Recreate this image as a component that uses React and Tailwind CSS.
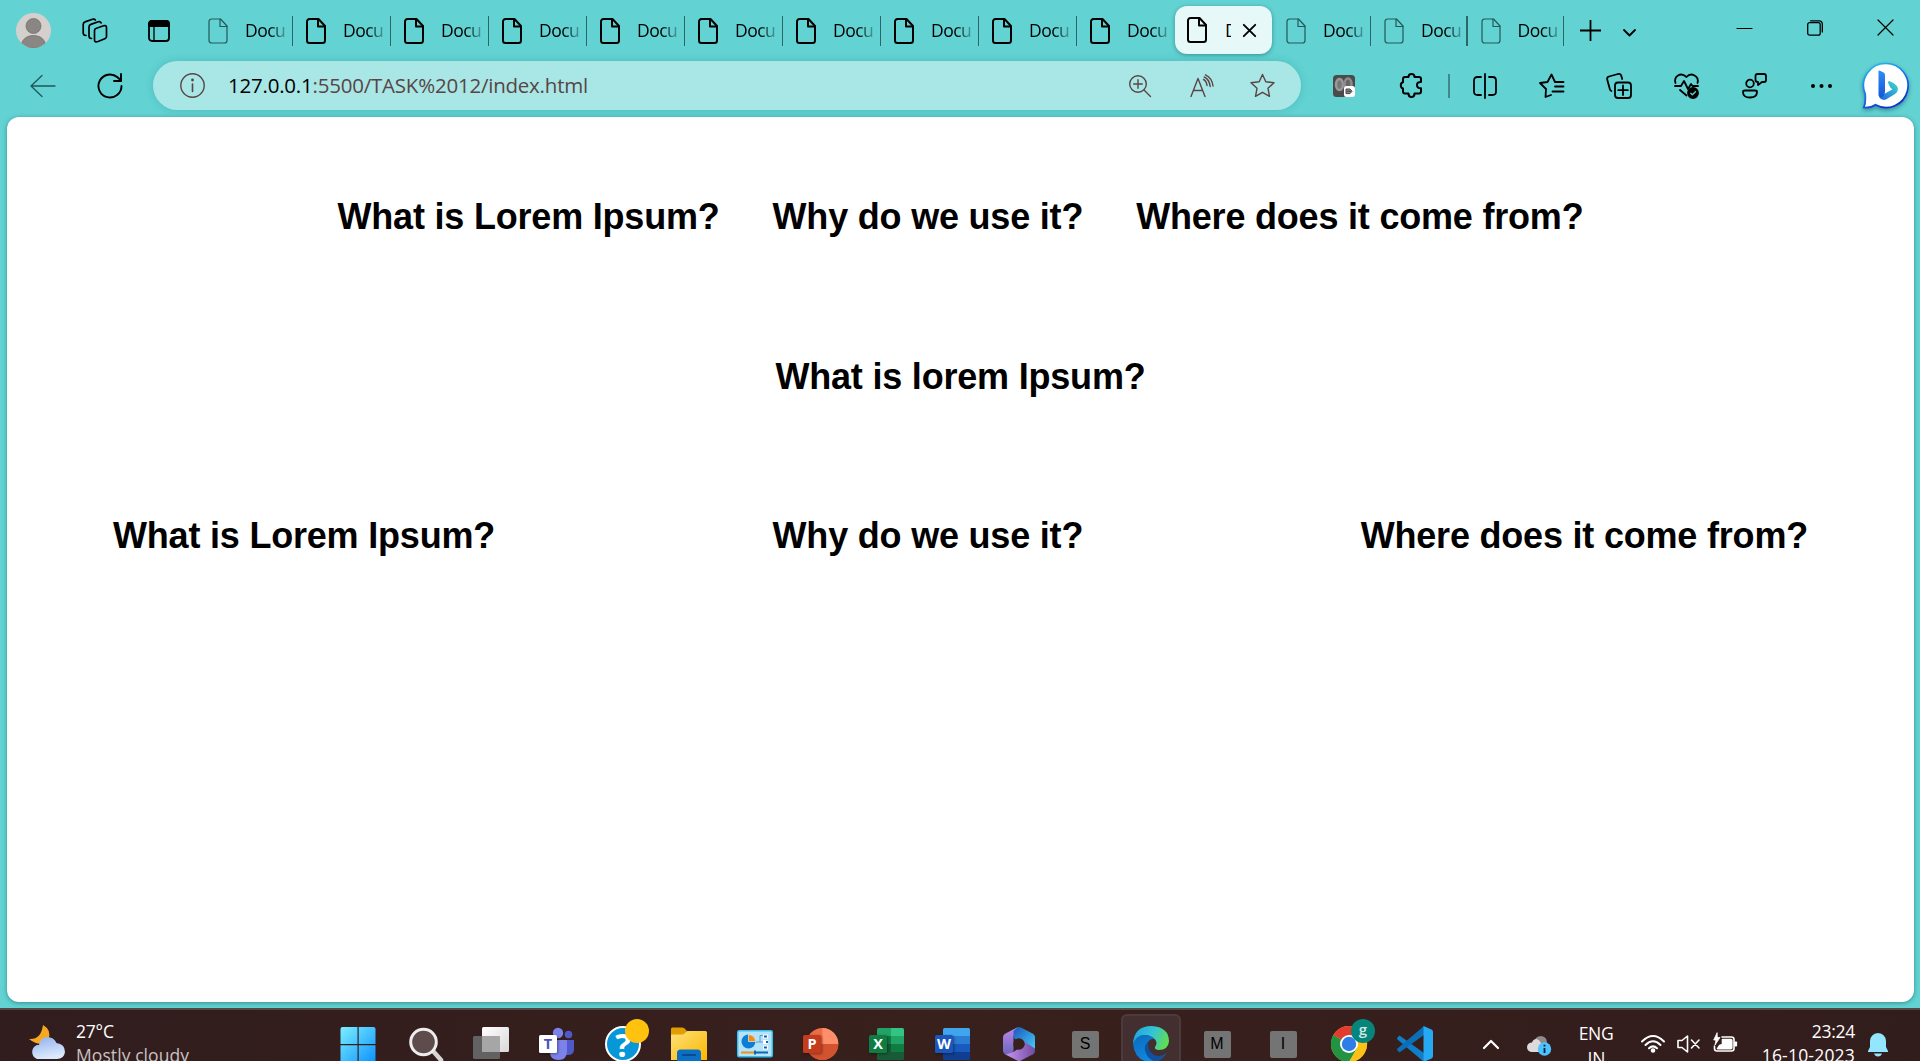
import React from "react";

const UI = "font-['Open_Sans','Noto_Sans',sans-serif]";

function Svg({ w = 26, h = w, vb = "0 0 24 24", className = "", sw = 1.5, children }) {
  return (
    <svg
      width={w}
      height={h}
      viewBox={vb}
      fill="none"
      stroke="currentColor"
      strokeWidth={sw}
      strokeLinecap="round"
      strokeLinejoin="round"
      className={"block shrink-0 overflow-visible " + className}
    >
      {children}
    </svg>
  );
}

function PageIcon({ dim }) {
  return (
    <Svg w={20} h={26} vb="0 0 20 26" sw={dim ? 1.2 : 2} className={dim ? "text-[#24585a]" : "text-black"}>
      <path d="M3.5 1H12.5L19 8V22.5a2.5 2.5 0 0 1-2.5 2.5h-13A2.5 2.5 0 0 1 1 22.5v-19A2.5 2.5 0 0 1 3.5 1Z" />
      <path d="M12 1.200V8.500H19" />
    </Svg>
  );
}

const tabs = Array.from({ length: 14 }, (_, i) => ({
  id: i,
  dim: i === 0 || i > 10,
  active: i === 10,
  divider: i !== 9 && i !== 10,
  width: i > 11 ? "w-[96.500px]" : "w-[98px]",
}));

function Tab({ dim, active, divider, width }) {
  if (active) {
    return (
      <div className="mt-1.5 mr-px flex h-12 w-[97px] items-center rounded-[12px] bg-[#e6f8f8] pl-3 shadow-[0_1px_4px_rgba(0,70,70,0.45)]">
        <PageIcon />
        <div className="ml-[18px] w-[6px] overflow-hidden text-[18px] leading-6 text-black">D</div>
        <Svg w={13} vb="0 0 13 13" sw={1.9} className="ml-3 text-black">
          <path d="M.8.8l11.400 11.400M12.200.8.8 12.200" />
        </Svg>
      </div>
    );
  }
  return (
    <div className={"flex h-[61px] items-center pl-[13px] " + width}>
      <PageIcon dim={dim} />
      <div className="mr-auto mb-0.5 ml-[17px] bg-linear-to-r from-black from-60% to-black/25 bg-clip-text text-[17.500px] leading-6 tracking-[-0.500px] whitespace-nowrap text-transparent">
        Docu
      </div>
      {divider && <div className="h-[30px] w-[1.500px] bg-[#2d6668]" />}
    </div>
  );
}

function TabStrip() {
  return (
    <div className="flex h-[61px] items-center">
      <div className="ml-4 size-[35px] overflow-hidden rounded-full bg-[#d3d0ce]">
        <svg viewBox="0 0 35 35" className="block size-full">
          <circle cx="17.500" cy="13" r="7.500" fill="#8a8684" stroke="#6e6a68" strokeWidth=".7" />
          <path d="M5 35c0-8 5-12.500 12.500-12.500S30 27 30 35Z" fill="#8a8684" stroke="#6e6a68" strokeWidth=".7" />
        </svg>
      </div>
      <Svg w={26} vb="0 0 26 26" sw={1.700} className="ml-[31px] text-black">
        <path d="M14.500 10.300 21.500 7.800q3-.9 3 1.700v9q0 1.600-1.700 2.300l-6.800 2.700q-3.500 1.300-3.500-1.700v-9.300q0-1.700 2-2.200Z" />
        <path d="M9.500 20.500Q7 20.300 7 18V9q0-2 1.800-2.600l7.500-2.700q2-.6 2.800 1.200" />
        <path d="M4 17.500Q1.200 17.300 1.200 15V6.500q0-2 1.800-2.600L10.500 1.200q2-.6 2.800.8" />
      </Svg>
      <Svg w={22} vb="0 0 22 22" sw={1.800} className="ml-10 text-black">
        <rect x="1" y="1" width="20" height="20" rx="3" />
        <path d="M1 6V4q0-3 3-3h14q3 0 3 3v2Z" fill="currentColor" />
        <path d="M6 6v15" strokeWidth="1.300" />
      </Svg>
      <div className="ml-[25px] flex h-[61px]">
        {tabs.map((t) => (
          <Tab key={t.id} dim={t.dim} active={t.active} divider={t.divider} width={t.width} />
        ))}
      </div>
      <Svg w={21} vb="0 0 21 21" sw={1.800} className="ml-4 text-black">
        <path d="M10.500 0v21M0 10.500h21" strokeLinecap="butt" />
      </Svg>
      <Svg w={13} h={8} vb="0 0 13 8" sw={1.800} className="mt-1 ml-[22px] text-black">
        <path d="m1 1 5.500 5.500L12 1" />
      </Svg>
      <div className="mr-[27px] ml-auto flex h-full items-center pb-1.5 text-black">
        <Svg w={15} h={16} vb="0 0 15 16" sw={1.200}>
          <path d="M0 8.500h15" />
        </Svg>
        <Svg w={16} vb="0 0 16 16" sw={1.300} className="ml-[55px]">
          <rect x=".7" y="2.700" width="12.500" height="12.500" rx="2" />
          <path d="M3.500.8h8.500q3.300 0 3.300 3.300v8" />
        </Svg>
        <Svg w={15} vb="0 0 15 15" sw={1.200} className="ml-[55px]">
          <path d="m0 0 15 15M15 0 0 15" />
        </Svg>
      </div>
    </div>
  );
}

function BingIcon() {
  return (
    <svg width="48" height="48" viewBox="0 0 48 48" className="ml-[30px] block shrink-0 overflow-visible drop-shadow-[0_2px_2px_rgba(0,50,90,0.45)]">
      <defs>
        <linearGradient id="bingRing" x1="0" y1="0" x2=".5" y2="1">
          <stop offset="0" stopColor="#20c4f0" />
          <stop offset=".5" stopColor="#1b7df0" />
          <stop offset="1" stopColor="#1232cc" />
        </linearGradient>
        <linearGradient id="bingStem" x1="0" y1="0" x2="0" y2="1">
          <stop offset="0" stopColor="#2f8df5" />
          <stop offset="1" stopColor="#1557d6" />
        </linearGradient>
        <linearGradient id="bingBowl" x1="0" y1="1" x2="1" y2="0">
          <stop offset="0" stopColor="#1c62e0" />
          <stop offset="1" stopColor="#3de0c8" />
        </linearGradient>
      </defs>
      <path d="M24 1.500a22 22 0 1 1-10.500 41.300Q9 46 1.800 45.500 4 41 3.200 32A22 22 0 0 1 24 1.500Z" fill="#fff" stroke="url(#bingRing)" strokeWidth="1.700" />
      <path d="M17 35q2.500 4 7 2.500l9-5.500q4-3 2.500-7-1.500-3-7-5.500-3-1-2.500 1l2 4.500q.8 1.500 2.500 2.300Z" fill="url(#bingBowl)" />
      <path d="M16.500 9.500q0-1.500 1.500-.8l3.500 1.800q1.500.8 1.500 2.500v17q-.5 4-3.500 5.500-3 0-3-3Z" fill="url(#bingStem)" />
    </svg>
  );
}

function Toolbar() {
  return (
    <div className="flex h-[49px] items-center text-black">
      <Svg w={25} h={22} vb="0 0 25 22" sw={1.300} className="ml-[30px] text-[#22585a]">
        <path d="M25 11H1M12 .5 1 11l11 10.500" />
      </Svg>
      <Svg w={26} vb="0 0 26 26" sw={1.900} className="ml-[42px]">
        <path d="M24.500 13A11.500 11.500 0 1 1 20.500 4.300L24 7.500" />
        <path d="M24 1v7h-7" />
      </Svg>
      <div className="ml-[30px] flex h-[49px] w-[1148px] items-center rounded-full bg-[#a8e7e6] text-[#5a4445] shadow-[0_0_8px_rgba(0,110,115,0.22)]">
        <Svg w={25} vb="0 0 25 25" sw={1.400} className="ml-[27px]">
          <circle cx="12.500" cy="12.500" r="11.700" />
          <path d="M12.500 11v7.500" strokeWidth="1.600" />
          <circle cx="12.500" cy="7" r=".7" fill="currentColor" />
        </Svg>
        <div className="mb-0.5 ml-[23px] text-[20.500px] leading-7 tracking-[-0.220px] whitespace-nowrap">
          <span className="text-black">127.0.0.1</span>:5500/TASK%2012/index.html
        </div>
        <div className="mr-[26px] ml-auto flex items-center">
          <Svg w={22} vb="0 0 22 22" sw={1.400}>
            <circle cx="9" cy="9" r="8.300" />
            <path d="M15 15l6.500 6.500M9 4.700v8.600M4.700 9h8.600" />
          </Svg>
          <Svg w={24} vb="0 0 24 24" sw={1.400} className="ml-[39px]">
            <path d="M1 22.500 8 4.500l7 18M3.500 16.500h9M13.500 5.500q3 1.500 3.500 6M14.200 3q5 2 6 9.500M15.500.8q6.500 3 7.500 11.200" />
          </Svg>
          <Svg w={25} vb="0 0 25 25" sw={1.400} className="ml-9">
            <path d="m12.500 1.500 3.300 7.300 8.200.9-6 5.600 1.500 8-7-4-7 4 1.500-8-6-5.600 8.200-.9Z" />
          </Svg>
        </div>
      </div>
      <svg width="22" height="22" viewBox="0 0 22 22" className="ml-8 block shrink-0">
        <rect width="22" height="22" rx="3.500" fill="#4b4b4b" />
        <ellipse cx="6.500" cy="9.500" rx="3.500" ry="5.500" fill="#777" stroke="#999" strokeWidth="2.500" />
        <ellipse cx="15" cy="9" rx="3.500" ry="5.500" fill="#666" stroke="#8c8c8c" strokeWidth="2.500" />
        <rect x="11" y="11" width="11" height="11" rx="2.500" fill="#fff" />
        <path d="M13 14h4l2 2.300-2 2.300h-4zM14 16.300h4" stroke="#444" fill="#888" />
      </svg>
      <Svg w={22} h={25} vb="0 0 22 25" sw={2} className="ml-[45px]">
        <path d="M5 4h3.500q0-3 3-3t3 3H19q2 0 2 2v3q-4-.3-4 3t4 3.300V18.500q0 2-2 2h-4.500q0 3.500-3 3.500t-3-3.500H5q-2 0-2-2v-3Q.8 15 .8 12.300T3 9.200V6q0-2 2-2Z" />
      </Svg>
      <div className="ml-[26px] h-6 w-[1.500px] bg-[#42888a]" />
      <Svg w={24} vb="0 0 24 24" sw={1.800} className="ml-[23px]">
        <path d="M8 3H4.500Q1 3 1 6.500v11Q1 21 4.500 21H8M16 3h3.500Q23 3 23 6.500v11q0 3.500-3.500 3.500H16M12 0v24" />
      </Svg>
      <Svg w={25} vb="0 0 25 25" sw={1.800} className="ml-[42.500px]">
        <path d="M12 22l-5.500 2L7 16 1 10l7.500-1L12.500 1.500 16 9h8.500M16 13.500h8.500M13.500 18.500h11" />
      </Svg>
      <Svg w={26} vb="0 0 26 26" sw={1.800} className="ml-[42px]">
        <rect x="9" y="9.500" width="16" height="15.500" rx="3" />
        <path d="M17 12.500v9.500M12.300 17.200h9.500M5.500 18q-1.300-.4-1.700-2L1.200 6.500Q.6 4.200 3 3.500L12 1q2.500-.5 3.200 1.500l1 3.500" />
      </Svg>
      <Svg w={26} vb="0 0 26 26" sw={1.800} className="ml-[42px]">
        <path d="M1.500 10Q0 5 4 2.500T12.500 4Q16 0 20.500 2.500t3 7.500M1 13h6l3-5 4 8 3-5 1.500 2H24M6 17l6.500 5.500" />
        <circle cx="19" cy="20" r="5" fill="currentColor" />
        <path d="m16.800 20.200 1.600 1.600 3-3" stroke="#62d2d2" strokeWidth="1.300" />
      </Svg>
      <Svg w={25} vb="0 0 25 25" sw={1.800} className="ml-[42px]">
        <circle cx="8" cy="10.500" r="3.800" />
        <path d="M3 17.500h10q2 0 2 1.500 0 5.500-7 5.500T1 19q0-1.500 2-1.500ZM15.500 1H22q2 0 2 2v4q0 2-2 2h-2l-4 3V9q-2.500 0-2.500-2V3q0-2 2-2Z" />
      </Svg>
      <Svg w={21} h={4} vb="0 0 21 4" sw={0} className="ml-[44px]">
        <circle cx="2" cy="2" r="2" fill="currentColor" />
        <circle cx="10.500" cy="2" r="2" fill="currentColor" />
        <circle cx="19" cy="2" r="2" fill="currentColor" />
      </Svg>
      <BingIcon />
    </div>
  );
}

function Icon36({ children }) {
  return (
    <svg width="36" height="36" viewBox="0 0 36 36" className="block shrink-0 overflow-visible">
      {children}
    </svg>
  );
}

function OfficeBadge({ letter, className, children }) {
  return (
    <div className="relative size-9">
      <Icon36>{children}</Icon36>
      <div className={"absolute top-[9px] left-0 flex size-[18px] items-center justify-center rounded-[1.500px] font-['Open_Sans',sans-serif] text-[14.500px] leading-none font-bold shadow-[1px_1px_3px_rgba(0,0,0,0.4)] " + className}>
        {letter}
      </div>
    </div>
  );
}

function LetterTile({ letter }) {
  return (
    <div className="flex size-[27px] items-center justify-center rounded-[2px] bg-[#747474] font-['Liberation_Sans',sans-serif] text-[16px] text-black">
      {letter}
    </div>
  );
}

const apps = [
  {
    id: "start",
    el: (
      <Icon36>
        <defs>
          <linearGradient id="win" gradientUnits="userSpaceOnUse" x1="0" y1="0" x2="36" y2="36">
            <stop offset="0" stopColor="#7cf0ff" />
            <stop offset="1" stopColor="#0a90ff" />
          </linearGradient>
        </defs>
        <path d="M1.500 1h15v17H-.5V3q0-2 2-2ZM17.700 1H32.500q2 0 2 2v15H17.700ZM-.5 19.200h17V36h-17ZM17.700 19.200H34.500V36H17.700Z" fill="url(#win)" />
      </Icon36>
    ),
  },
  {
    id: "search",
    el: (
      <Icon36>
        <path d="m26 25 8 9" stroke="#d9d5d5" strokeWidth="4.500" strokeLinecap="round" />
        <circle cx="16.500" cy="16" r="12.800" fill="#5e4c4c" stroke="#eeecec" strokeWidth="3" />
      </Icon36>
    ),
  },
  {
    id: "taskview",
    el: (
      <Icon36>
        <defs>
          <linearGradient id="tv" x2="1" y2="1">
            <stop stopColor="#fff" />
            <stop offset="1" stopColor="#d8d8d8" />
          </linearGradient>
        </defs>
        <rect x="9" y="1" width="27" height="25" rx="1.500" fill="url(#tv)" />
        <rect x="0" y="10" width="27" height="23" rx="1.500" fill="#626262" />
        <path d="M9 10h17q1 0 1 1v15H9Z" fill="#a6a6a6" />
      </Icon36>
    ),
  },
  {
    id: "teams",
    el: (
      <OfficeBadge letter="T" className="bg-white text-[#4b53bc]">
        <circle cx="29.500" cy="8.500" r="3.800" fill="#5059c9" />
        <path d="M26 14h9v9q0 6-6 6h-3Z" fill="#5059c9" />
        <circle cx="19" cy="7" r="5.200" fill="#7b83eb" />
        <path d="M11 14h17v11q0 9-8.500 9T11 26Z" fill="#7b83eb" />
      </OfficeBadge>
    ),
  },
  {
    id: "help",
    el: (
      <div className="relative size-9">
        <div className="flex size-9 items-center justify-center rounded-full border-2 border-white bg-[#0797d8] font-['Open_Sans',sans-serif] text-[33px] leading-none font-bold text-white">?</div>
        <div className="absolute -top-[7px] left-5 size-6 rounded-full bg-[#ffc20e]" />
      </div>
    ),
  },
  {
    id: "files",
    el: (
      <Icon36>
        <defs>
          <linearGradient id="fold" x2="1" y2="1">
            <stop stopColor="#ffe07a" />
            <stop offset="1" stopColor="#f9b800" />
          </linearGradient>
        </defs>
        <path d="M0 3q0-1.500 1.500-1.500H11q1.500 0 2.500 1l2 2V12H0Z" fill="#e09e00" />
        <path d="M0 8.500h11q1.500 0 2.500-1l2.500-2.500h18.500Q36 5 36 6.500V34H0Z" fill="url(#fold)" />
        <path d="M6 36v-9q0-3.500 3.500-3.500h17q3.500 0 3.500 3.500v9Z" fill="#0b6fc4" />
        <path d="M11 29h14" stroke="#0a3f80" strokeWidth="1.500" />
      </Icon36>
    ),
  },
  {
    id: "control",
    el: (
      <Icon36>
        <rect x=".7" y="4.700" width="34.600" height="26" rx="1.500" fill="#b5e3fa" stroke="#35bff0" strokeWidth="1.500" />
        <circle cx="11.500" cy="15.500" r="7" fill="#0b7ed6" />
        <path d="M11.500 15.500V8.500a7 7 0 0 1 7 7Z" fill="#f38b12" stroke="#fff" strokeWidth=".6" />
        <path d="M19 16h4V9.500h3M23 16h3" stroke="#58a0cc" fill="none" />
        <path d="M26 10.500h5M26 16h5M26 21.500h5" stroke="#fff" strokeWidth="4" />
        <path d="M27 10.500h3M29 16h2M27 21.500h3" stroke="#0b67b2" strokeWidth="2" />
        <path d="M4 26.500h14" stroke="#e8941d" strokeWidth="2" />
        <path d="M19 26.500h12M18 24.500v4" stroke="#0b67b2" strokeWidth="2" />
      </Icon36>
    ),
  },
  {
    id: "powerpoint",
    el: (
      <OfficeBadge letter="P" className="bg-[#c43b1d] text-white">
        <circle cx="19.300" cy="18" r="16" fill="#ed6c47" />
        <path d="M19.300 2a16 16 0 0 1 16 16h-16Z" fill="#ff8f6b" />
        <path d="M3.300 18h32a16 16 0 0 1-32 0Z" fill="#d35230" />
      </OfficeBadge>
    ),
  },
  {
    id: "excel",
    el: (
      <OfficeBadge letter="X" className="bg-[#107c41] text-white">
        <path d="M9.500 2H22v8H8V3.500Q8 2 9.500 2Z" fill="#21a366" />
        <path d="M22 2h11.500Q35 2 35 3.500V10H22Z" fill="#33c481" />
        <path d="M8 10h14v8H8Z" fill="#107c41" />
        <path d="M22 10h13v8H22Z" fill="#21a366" />
        <path d="M8 18h14v8H8ZM8 26h27v6.500q0 1.500-1.500 1.500h-24Q8 34 8 32.500Z" fill="#185c37" />
        <path d="M22 18h13v8H22Z" fill="#107c41" />
      </OfficeBadge>
    ),
  },
  {
    id: "word",
    el: (
      <OfficeBadge letter="W" className="bg-[#1b56bd] text-white">
        <path d="M9.500 2h24Q35 2 35 3.500V10H8V3.500Q8 2 9.500 2Z" fill="#41a5ee" />
        <path d="M8 10h27v8H8Z" fill="#2b7cd3" />
        <path d="M8 18h27v8H8Z" fill="#185abd" />
        <path d="M8 26h27v6.500q0 1.500-1.500 1.500h-24Q8 34 8 32.500Z" fill="#103f91" />
      </OfficeBadge>
    ),
  },
  {
    id: "m365",
    el: (
      <Icon36>
        <defs>
          <linearGradient id="m1" x2="0" y2="1">
            <stop stopColor="#c08bee" />
            <stop offset="1" stopColor="#6362b8" />
          </linearGradient>
          <linearGradient id="m2" x2="1" y2="1">
            <stop stopColor="#1b52b8" />
            <stop offset="1" stopColor="#48d4fb" />
          </linearGradient>
          <linearGradient id="m3" x2="1" y2="0">
            <stop stopColor="#ca94f4" />
            <stop offset="1" stopColor="#69489a" />
          </linearGradient>
          <mask id="m365ring">
            <path d="M16 1.500q2-1 4 0l12 6.300q2 1.200 2 3.500v13.500q0 2.300-2 3.500l-12 6.300q-2 1-4 0L4 28.300q-2-1.200-2-3.500V11.300q0-2.300 2-3.500Z" fill="#fff" />
            <circle cx="18" cy="18" r="5.700" fill="#000" />
          </mask>
        </defs>
        <g mask="url(#m365ring)">
          <path d="M18 0 0 8v21l6 2 6.500-6V10Z" fill="url(#m1)" />
          <path d="M12.500 5 18 0l18 8v16l-12.500-6L12.500 12Z" fill="url(#m2)" />
          <path d="M36 24v6L18 36 4 29l9-3.500 10.500-6.500V15.500Z" fill="url(#m3)" />
        </g>
      </Icon36>
    ),
  },
  { id: "tile-s", el: <LetterTile letter="S" /> },
  {
    id: "edge",
    selected: true,
    el: (
      <Icon36>
        <defs>
          <linearGradient id="e1" x1="0" y1=".3" x2="1" y2=".6">
            <stop stopColor="#1fa7e0" />
            <stop offset=".5" stopColor="#35c4d4" />
            <stop offset="1" stopColor="#62df4b" />
          </linearGradient>
          <linearGradient id="e2" x2=".7" y2="1">
            <stop stopColor="#0c6abf" />
            <stop offset="1" stopColor="#0f8fe3" />
          </linearGradient>
        </defs>
        <path d="M0 18Q1 0 18.500 0 36 1 36 15.500q-1 8.500-10 8.500-5-.5-4-3 3-4 0-7.500Q18 9 11 9 4 9.500 0 18Z" fill="url(#e1)" />
        <path d="M0 18Q3 9.500 11 9q7 0 10.500 4-6-.8-7.500 5.500-.5 9 8 12.500 6 1 11-3.500Q28 36 18 36 2 35.500 0 18Z" fill="url(#e2)" />
        <path d="M15.500 15.500q-4.500 3-3.500 9 2 8 9.500 11Q29 34.500 33.500 27q-5 4-11 2.500-9-4-7-14Z" fill="#114f9f" />
      </Icon36>
    ),
  },
  { id: "tile-m", el: <LetterTile letter="M" /> },
  { id: "tile-i", el: <LetterTile letter="I" /> },
  {
    id: "chrome",
    el: (
      <div className="relative size-9">
        <Icon36>
          <circle cx="18" cy="18" r="18" fill="#fbc116" />
          <path d="M18 18 2.400 9A18 18 0 0 1 33.600 9H18Z" fill="#e33b2e" />
          <path d="M18 18 2.400 9A18 18 0 0 0 18 36l7.800-13.500Z" fill="#229342" />
          <path d="M18 9h15.600A18 18 0 0 1 18 36l7.800-13.500Z" fill="#fbc116" />
          <circle cx="18" cy="18" r="9" fill="#fff" />
          <circle cx="18" cy="18" r="7.200" fill="#2f7de9" />
        </Icon36>
        <div className="absolute -top-[7px] left-5 flex size-6 items-center justify-center rounded-full bg-[#06857a] pb-1 font-['Open_Sans',sans-serif] text-[15px] leading-none font-semibold text-[#cfe9e6]">g</div>
      </div>
    ),
  },
  {
    id: "vscode",
    el: (
      <Icon36>
        <path d="M2.500 9.500.5 11.500q-.8 1 0 2L27 36V27Z" fill="#0f7fc9" />
        <path d="M2.500 26.500.5 24.500q-.8-1 0-2L27 0V9Z" fill="#0b6fb8" />
        <path d="m26.500 0 8 3.500Q36 4.200 36 6v24q0 1.800-1.500 2.500l-8 3.500Z" fill="#27a8f2" />
      </Icon36>
    ),
  },
];

function Taskbar() {
  return (
    <div className="flex h-[53px] items-start overflow-hidden border-t-2 border-[#524847] bg-linear-to-r from-[#311d1e] via-[#38201c] via-50% to-[#321d1d]">
      <div className="flex w-[326px] shrink-0 pt-[13px] pl-[29px]">
        <svg width="36" height="36" viewBox="0 0 36 36" className="mt-0.5 block shrink-0">
          <defs>
            <linearGradient id="cl" x2=".3" y2="1">
              <stop stopColor="#8fb0ee" />
              <stop offset="1" stopColor="#dbe9fc" />
            </linearGradient>
          </defs>
          <path d="M14 0q9 5 5.500 15-8 8-19.500-1Q12 15 14 0Z" fill="#f6a823" />
          <path d="M8 34a7.500 7.500 0 0 1 0-14h2q1-7 8-8 7 0 9.500 6Q36 19 36 27q-1 7-8 7Z" fill="url(#cl)" />
        </svg>
        <div className="ml-[11px] text-[17.500px] leading-6 whitespace-nowrap text-white">
          <div className="-mt-1 tracking-[-0.200px]">27°C</div>
          <div className="tracking-[0.080px] text-[#c9c1c1]">Mostly cloudy</div>
        </div>
      </div>
      <div className="flex shrink-0">
        {apps.map((a) => (
          <div key={a.id} className="flex w-[66px] justify-center">
            <div
              className={
                a.selected
                  ? "mt-1 flex h-[60px] w-[60px] items-center justify-center rounded-md border-2 border-[#4c3b3c] bg-[#432f30]"
                  : "mt-1 flex h-[60px] w-[60px] items-center justify-center"
              }
            >
              {a.el}
            </div>
          </div>
        ))}
      </div>
      <div className="mr-8 ml-auto flex items-start text-white">
        <Svg w={16} h={9} vb="0 0 16 9" sw={2.200} className="mt-[30px]">
          <path d="m1 8 7-7 7 7" />
        </Svg>
        <svg width="24" height="22" viewBox="0 0 24 22" className="mt-[25px] ml-7 block shrink-0 overflow-visible">
          <path d="M7 8q1-7 7-7 6 .5 6 7v8H8Z" fill="#8f8b8b" />
          <path d="M4 17q-4-1-4-5 .5-4.500 5-4.500Q6 4 9.500 4q4 1 5 6v7Z" fill="#dcdada" />
          <circle cx="17.500" cy="14" r="6.700" fill="#4cc2ff" />
          <path d="M17.500 13v5M17.500 9.800v1.700" stroke="#10202c" strokeWidth="1.800" />
        </svg>
        <div className="mt-[11px] ml-7 w-[35px] text-center text-[17.500px] leading-[25px]">
          <div className="-ml-1 w-[42px] tracking-[-0.300px]">ENG</div>
          <div>IN</div>
        </div>
        <Svg w={24} h={17} vb="0 0 24 17" sw={2} className="mt-[25px] ml-[27px]">
          <path d="M1 6.500q11-11 22 0M4.500 10q7.500-7.500 15 0M8 13.300q4-3.800 8 0" />
          <circle cx="12" cy="15.500" r="1.300" fill="currentColor" />
        </Svg>
        <Svg w={23} h={18} vb="0 0 23 18" sw={1.600} className="mt-[25px] ml-3">
          <path d="M1 5.500h4L10.500 1v16L5 12.500H1ZM14.500 5l7.500 8M22 5l-7.500 8" />
        </Svg>
        <Svg w={24} h={20} vb="0 0 24 20" sw={1.600} className="mt-[23px] ml-[13px]">
          <path d="M9 4h9.500q2.500 0 2.500 2.500v9q0 2.500-2.500 2.500H4q-2.500 0-2.500-2.500V13" />
          <path d="M9.500 6.500h8.500q.8 0 .8.800v7.500q0 .8-.8.8H4.500l2-3 3-1Z" fill="currentColor" />
          <path d="M22 9.300h1.300v3.500H22Z" fill="currentColor" />
          <path d="m4 0-3.300 7H3L2 12l5-7.500H4.500Z" fill="currentColor" strokeWidth=".8" />
        </Svg>
        <div className="mt-[9px] ml-[22px] w-[96px] text-right text-[17.500px] leading-6 whitespace-nowrap">
          <div className="tracking-[-0.250px]">23:24</div>
          <div className="tracking-[0.200px]">16-10-2023</div>
        </div>
        <svg width="20" height="24" viewBox="0 0 20 24" className="mt-[23px] ml-[13px] block shrink-0">
          <path d="M10 0q7.500.8 8 8v6l2 4v1H0v-1l2-4V8Q2.500.8 10 0ZM6 20.500h8q-1 3-4 3t-4-3Z" fill="#93e6ff" />
        </svg>
      </div>
    </div>
  );
}

export default function App() {
  return (
    <div className={"flex h-[1061px] w-[1920px] flex-col overflow-hidden bg-[#62d2d2] " + UI}>
      <TabStrip />
      <Toolbar />
      <main className="mt-[7px] mr-1.5 mb-1.5 ml-[7px] flex-1 rounded-[12px] bg-white px-[106px] pt-[79px] font-['Liberation_Sans',Arial,sans-serif] text-[36px] leading-[42px] font-bold tracking-[-0.200px] whitespace-nowrap text-black shadow-[0_1px_4px_rgba(0,80,85,0.5)]">
        <div className="flex justify-center gap-[53px]">
          <h1>What is Lorem Ipsum?</h1>
          <h1>Why do we use it?</h1>
          <h1>Where does it come from?</h1>
        </div>
        <div className="mt-[118px] flex justify-center">
          <h1>What is lorem Ipsum?</h1>
        </div>
        <div className="mt-[117px] flex justify-between">
          <h1>What is Lorem Ipsum?</h1>
          <h1>Why do we use it?</h1>
          <h1>Where does it come from?</h1>
        </div>
      </main>
      <Taskbar />
    </div>
  );
}
